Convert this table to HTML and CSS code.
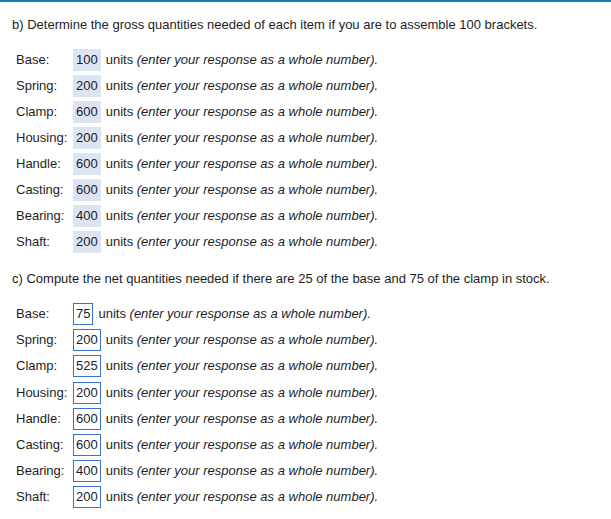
FILE: index.html
```html
<!DOCTYPE html>
<html>
<head>
<meta charset="utf-8">
<link rel="stylesheet" href="styles.css">
</head>
<body>
<div class="page">
  <p class="q">b) Determine the gross quantities needed of each item if you are to assemble 100 brackets.</p>
  <div class="rows">
    <div class="row"><span class="label">Base:</span><span class="val">100</span><span class="units">units <i>(enter your response as a whole number).</i></span></div>
    <div class="row"><span class="label">Spring:</span><span class="val">200</span><span class="units">units <i>(enter your response as a whole number).</i></span></div>
    <div class="row"><span class="label">Clamp:</span><span class="val">600</span><span class="units">units <i>(enter your response as a whole number).</i></span></div>
    <div class="row"><span class="label">Housing:</span><span class="val">200</span><span class="units">units <i>(enter your response as a whole number).</i></span></div>
    <div class="row"><span class="label">Handle:</span><span class="val">600</span><span class="units">units <i>(enter your response as a whole number).</i></span></div>
    <div class="row"><span class="label">Casting:</span><span class="val">600</span><span class="units">units <i>(enter your response as a whole number).</i></span></div>
    <div class="row"><span class="label">Bearing:</span><span class="val">400</span><span class="units">units <i>(enter your response as a whole number).</i></span></div>
    <div class="row"><span class="label">Shaft:</span><span class="val">200</span><span class="units">units <i>(enter your response as a whole number).</i></span></div>
  </div>
  <p class="q q-c">c) Compute the net quantities needed if there are 25 of the base and 75 of the clamp in stock.</p>
  <div class="rows rows-c">
    <div class="row"><span class="label">Base:</span><span class="val boxed">75</span><span class="units">units <i>(enter your response as a whole number).</i></span></div>
    <div class="row"><span class="label">Spring:</span><span class="val boxed">200</span><span class="units">units <i>(enter your response as a whole number).</i></span></div>
    <div class="row"><span class="label">Clamp:</span><span class="val boxed">525</span><span class="units">units <i>(enter your response as a whole number).</i></span></div>
    <div class="row"><span class="label">Housing:</span><span class="val boxed">200</span><span class="units">units <i>(enter your response as a whole number).</i></span></div>
    <div class="row"><span class="label">Handle:</span><span class="val boxed">600</span><span class="units">units <i>(enter your response as a whole number).</i></span></div>
    <div class="row"><span class="label">Casting:</span><span class="val boxed">600</span><span class="units">units <i>(enter your response as a whole number).</i></span></div>
    <div class="row"><span class="label">Bearing:</span><span class="val boxed">400</span><span class="units">units <i>(enter your response as a whole number).</i></span></div>
    <div class="row"><span class="label">Shaft:</span><span class="val boxed">200</span><span class="units">units <i>(enter your response as a whole number).</i></span></div>
  </div>
</div>
</body>
</html>
```
FILE: styles.css
```css
html, body {
  margin: 0;
  padding: 0;
  background: #fff;
}
.page {
  border-top: 2px solid #1a7fa6;
  padding: 15px 12px 0 12px;
  font-family: "Liberation Sans", Arial, sans-serif;
  font-size: 13px;
  line-height: 16px;
  color: #1e1e1e;
}
.q {
  margin: 0;
}
.rows {
  margin-top: 14px;
  padding-left: 4px;
}
.q-c {
  margin-top: 16px;
}
.rows-c {
  margin-top: 14px;
}
.rows-c .row {
  height: 26.2px;
}
.row {
  display: flex;
  align-items: center;
  height: 26px;
}
.label {
  width: 57px;
  flex: none;
}
.val {
  display: flex;
  align-items: center;
  height: 22px;
  box-sizing: border-box;
  padding: 0 2px;
  border: 1px solid transparent;
  background: #dce3f1;
  color: #1a1a2e;
}
.val.boxed {
  background: #fff;
  border-color: #3b6fd1;
}
.units {
  margin-left: 5px;
}
.units i {
  font-style: italic;
}
```
